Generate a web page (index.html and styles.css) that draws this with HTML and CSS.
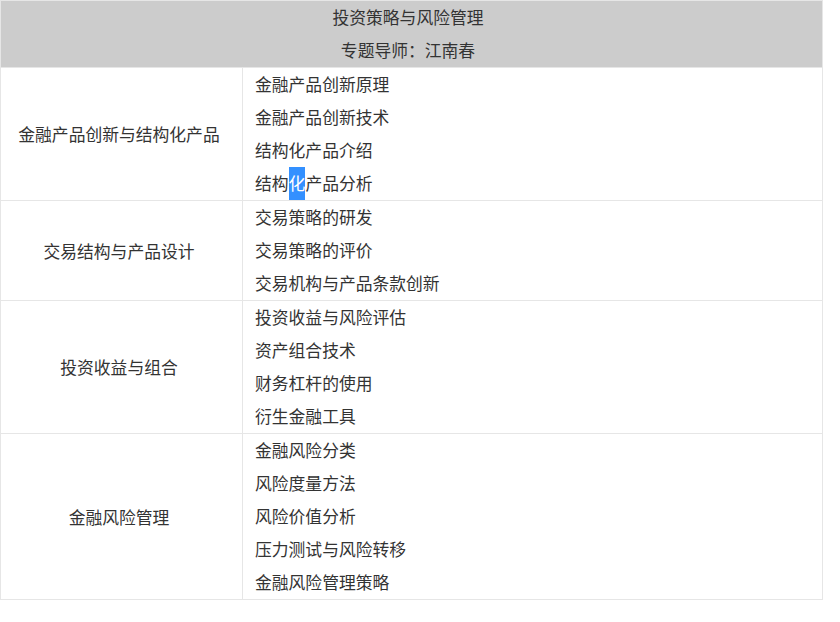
FILE: index.html
```html
<!DOCTYPE html>
<html lang="zh">
<head>
<meta charset="utf-8">
<title>投资策略与风险管理</title>
<link rel="stylesheet" href="styles.css">
</head>
<body>
<table class="course">
  <colgroup>
    <col class="col-topic">
    <col class="col-items">
  </colgroup>
  <thead>
    <tr>
      <th colspan="2" class="head">
        <div class="line">投资策略与风险管理</div>
        <div class="line">专题导师：江南春</div>
      </th>
    </tr>
  </thead>
  <tbody>
    <tr>
      <td class="topic">金融产品创新与结构化产品</td>
      <td class="items">
        <div class="line">金融产品创新原理</div>
        <div class="line">金融产品创新技术</div>
        <div class="line">结构化产品介绍</div>
        <div class="line">结构<span class="sel">化</span>产品分析</div>
      </td>
    </tr>
    <tr>
      <td class="topic">交易结构与产品设计</td>
      <td class="items">
        <div class="line">交易策略的研发</div>
        <div class="line">交易策略的评价</div>
        <div class="line">交易机构与产品条款创新</div>
      </td>
    </tr>
    <tr>
      <td class="topic">投资收益与组合</td>
      <td class="items">
        <div class="line">投资收益与风险评估</div>
        <div class="line">资产组合技术</div>
        <div class="line">财务杠杆的使用</div>
        <div class="line">衍生金融工具</div>
      </td>
    </tr>
    <tr>
      <td class="topic">金融风险管理</td>
      <td class="items">
        <div class="line">金融风险分类</div>
        <div class="line">风险度量方法</div>
        <div class="line">风险价值分析</div>
        <div class="line">压力测试与风险转移</div>
        <div class="line">金融风险管理策略</div>
      </td>
    </tr>
  </tbody>
</table>
</body>
</html>
```
FILE: styles.css
```css
html, body {
  margin: 0;
  padding: 0;
  background: #fff;
}
body {
  font-family: "Microsoft YaHei", "Noto Sans CJK SC", "Noto Sans", sans-serif;
  font-size: 16.8px;
  color: #333;
}
.course {
  border-collapse: collapse;
  width: 823px;
  table-layout: fixed;
}
.col-topic {
  width: 242px;
}
.course th,
.course td {
  border: 1px solid #e6e6e6;
  padding: 0;
  font-weight: normal;
}
.head {
  background: #cccccc;
  text-align: center;
  padding-right: 7px !important;
}
.line {
  height: 33px;
  line-height: 32px;
  white-space: nowrap;
}
.topic {
  text-align: center;
  vertical-align: middle;
  padding-right: 5px !important;
}
.items {
  padding-left: 12px !important;
  text-align: left;
  vertical-align: top;
}
.sel {
  display: inline-block;
  height: 33px;
  vertical-align: top;
  background: #3390ff;
  color: #fff;
}
```
